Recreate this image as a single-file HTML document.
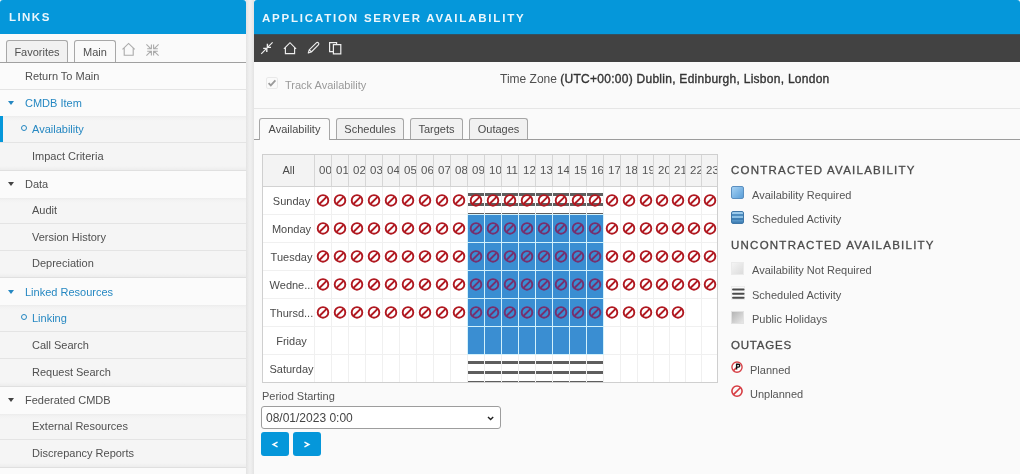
<!DOCTYPE html>
<html><head><meta charset="utf-8"><style>
*{box-sizing:border-box;margin:0;padding:0}
html,body{width:1020px;height:474px;overflow:hidden;background:#ececec;font-family:"Liberation Sans",sans-serif;color:#444}
.abs{position:absolute}
#left{position:absolute;left:0;top:0;width:246px;height:474px;background:#f6f6f6;overflow:hidden;will-change:transform}
#right{position:absolute;left:254px;top:0;width:766px;height:474px;background:#fafafa;overflow:hidden;will-change:transform}
.hdr{position:absolute;left:0;top:0;height:34px;background:#0597da;border-radius:3px 3px 0 0;color:#eaf6fc;font-weight:bold;font-size:11.5px;letter-spacing:1.8px;line-height:36px;white-space:nowrap}
.sep{position:absolute;left:246px;top:0;width:8px;height:474px;background:linear-gradient(to right,#e3e3e3,#efefef 40%,#efefef 60%,#e3e3e3)}
.tabbar{position:absolute;left:0;top:34px;width:246px;height:29px;background:#fafafa;border-bottom:1px solid #a0a0a0}
.ltab{position:absolute;top:6px;height:22px;border:1px solid #a8a8a8;border-bottom:none;border-radius:3px 3px 0 0;font-size:11px;line-height:23px;color:#505050;text-align:center}
.row{position:absolute;left:0;width:246px;font-size:11px;color:#505050;border-bottom:1px solid #e4e4e4}
.row span{position:absolute;white-space:nowrap;line-height:12px}
.grp{background:#fbfbfb}
.sub{background:#f5f5f5}
.sublast{background:linear-gradient(to bottom,#f5f5f5 85%,#ededed);border-bottom-color:#e0e0e0}
.subtop{background:linear-gradient(to bottom,#ececec,#f2f2f2 2px,#f5f5f5 5px)}
.blue{color:#2688c2}
.tri{position:absolute;width:0;height:0;border-left:3px solid transparent;border-right:3px solid transparent;border-top:4px solid #444}
.tri.b{border-top-color:#2688c2}
.bul{position:absolute;width:6px;height:6px;border:1.3px solid #2688c2;border-radius:50%}
.txt{position:absolute;white-space:nowrap;font-size:11px;line-height:12px}
</style></head><body>
<div id="left">
<div class="hdr" style="width:246px;padding-left:9px;letter-spacing:1.45px;line-height:35px">LINKS</div>
<div class="tabbar"><div class="ltab" style="left:6px;width:62px;background:#f1f1f1">Favorites</div><div class="ltab" style="left:74px;width:42px;background:#fafafa">Main</div></div>
<div class="row grp" style="top:63px;height:27px"><span style="left:25px;top:7px">Return To Main</span></div>
<div class="row grp blue" style="top:90px;height:27px;border-bottom:none"><i class="tri b" style="left:8px;top:11px"></i><span style="left:25px;top:7px">CMDB Item</span></div>
<div class="row sub subtop blue" style="top:116px;height:27px"><i class="abs" style="left:0;top:0;width:3px;height:26px;background:#0597da"></i><i class="bul" style="left:20.5px;top:9px"></i><span style="left:32px;top:7px">Availability</span></div>
<div class="row sub sublast" style="top:143px;height:28px"><span style="left:32px;top:7px">Impact Criteria</span></div>
<div class="row grp" style="top:171px;height:27px;border-bottom:none"><i class="tri" style="left:8px;top:11px"></i><span style="left:25px;top:7px">Data</span></div>
<div class="row sub subtop" style="top:198px;height:26px"><span style="left:32px;top:6px">Audit</span></div>
<div class="row sub" style="top:224px;height:27px"><span style="left:32px;top:7px">Version History</span></div>
<div class="row sub sublast" style="top:251px;height:27px"><span style="left:32px;top:6px">Depreciation</span></div>
<div class="row grp blue" style="top:278px;height:28px;border-bottom:none"><i class="tri b" style="left:8px;top:12px"></i><span style="left:25px;top:8px">Linked Resources</span></div>
<div class="row sub subtop blue" style="top:305px;height:27px"><i class="bul" style="left:20.5px;top:9px"></i><span style="left:32px;top:7px">Linking</span></div>
<div class="row sub" style="top:332px;height:27px"><span style="left:32px;top:7px">Call Search</span></div>
<div class="row sub sublast" style="top:359px;height:28px"><span style="left:32px;top:7px">Request Search</span></div>
<div class="row grp" style="top:387px;height:27px;border-bottom:none"><i class="tri" style="left:8px;top:11px"></i><span style="left:25px;top:7px">Federated CMDB</span></div>
<div class="row sub subtop" style="top:414px;height:26px"><span style="left:32px;top:6px">External Resources</span></div>
<div class="row sub sublast" style="top:440px;height:28px"><span style="left:32px;top:7px">Discrepancy Reports</span></div>
<div class="row grp" style="top:468px;height:28px;border-bottom:none"><i class="tri" style="left:8px;top:12px"></i><span style="left:25px;top:8px"></span></div>
<svg class="abs" style="left:118px;top:40px" width="46" height="20" viewBox="118 40 46 20" fill="none" stroke="#ababab" stroke-width="1.1">
<path d="M122.5 49.3 L128.6 43.4 L134.7 49.3 M124.2 47.6 V55.2 H133.2 V47.6"/>
<path d="M146.4 44.3 L151 48.9 M151.4 44.6 V48.8 H147.2 M158.6 44.3 L154 48.9 M153.6 44.6 V48.8 H157.8 M146.4 55.7 L151 51.1 M151.4 55.4 V51.2 H147.2 M158.6 55.7 L154 51.1 M153.6 55.4 V51.2 H157.8"/>
</svg>
</div>
<div class="sep"></div>
<div id="right">
<div class="hdr" style="width:766px;padding-left:8px">APPLICATION SERVER AVAILABILITY</div>
<div class="abs" style="left:0;top:34px;width:766px;height:28px;background:#424242;border-top:1px solid #34505f"></div>
</div>
<div style="position:absolute;left:0;top:0;width:1020px;height:474px;will-change:transform">
<svg class="abs" style="left:254px;top:34px" width="100" height="27" viewBox="254 34 100 27" fill="none" stroke="#eeeeee" stroke-width="1.2">
<path d="M261.2 53.8 L266.4 48.6 M272.6 42.4 L267.6 47.4"/>
<path d="M263.2 48.4 H266.8 V52 M267.4 43.8 V47.4 H271" stroke-width="1.4"/>
<path d="M283.9 48.9 L290 42.7 L296.1 48.9 M285.4 47.6 V53.6 H294.6 V47.6" stroke-width="1.15"/>
<path d="M308.3 53 L309.2 49.9 L316.3 42.8 A1.45 1.45 0 0 1 318.4 44.9 L311.3 52 Z M309.4 49.8 L311.4 51.8" stroke-width="1.1" stroke-linejoin="round"/>
<path d="M333 51.6 H329.6 V42.6 H336.6 V44.4 M333.4 44.6 H340.8 V53.8 H333.4 Z"/>
</svg>
<div class="abs" style="left:266px;top:77px;width:12px;height:12px;border:1px solid #e9e9e9;border-radius:2px;background:#fafafa"></div>
<svg class="abs" style="left:266px;top:77px" width="12" height="12" viewBox="0 0 12 12"><path d="M2.6 6.2 L4.8 8.4 L9.4 3.4" fill="none" stroke="#9a9a9a" stroke-width="1.8"/></svg>
<div class="txt" style="left:285px;top:79px;color:#9a9a9a;font-size:11px">Track Availability</div>
<div class="txt" style="left:500px;top:72px;color:#505050;font-size:12px;line-height:14px">Time Zone <span style="color:#333;letter-spacing:0.27px;-webkit-text-stroke:0.35px #333">(UTC+00:00) Dublin, Edinburgh, Lisbon, London</span></div>
<div class="abs" style="left:254px;top:108px;width:766px;height:1px;background:#e6e6e6"></div>
<div class="abs" style="left:254px;top:139px;width:766px;height:1px;background:#9c9c9c"></div>
<div class="abs" style="left:259px;top:118px;width:71px;height:22px;border:1px solid #a6a6a6;border-bottom:none;border-radius:3px 3px 0 0;background:#fafafa;font-size:11px;line-height:20px;text-align:center;color:#4a4a4a">Availability</div>
<div class="abs" style="left:336px;top:118px;width:68px;height:21px;border:1px solid #a6a6a6;border-bottom:none;border-radius:3px 3px 0 0;background:#f1f1f1;font-size:11px;line-height:20px;text-align:center;color:#4a4a4a">Schedules</div>
<div class="abs" style="left:410px;top:118px;width:53px;height:21px;border:1px solid #a6a6a6;border-bottom:none;border-radius:3px 3px 0 0;background:#f1f1f1;font-size:11px;line-height:20px;text-align:center;color:#4a4a4a">Targets</div>
<div class="abs" style="left:469px;top:118px;width:59px;height:21px;border:1px solid #a6a6a6;border-bottom:none;border-radius:3px 3px 0 0;background:#f1f1f1;font-size:11px;line-height:20px;text-align:center;color:#4a4a4a">Outages</div>
<div class="abs" style="left:262px;top:154px;width:456px;height:229px;border:1px solid #cfcfcf;background:#fff"></div>
<div class="abs" style="left:263px;top:155px;width:454px;height:31px;background:#f3f3f3"></div>
<div class="abs" style="left:263px;top:186px;width:454px;height:1px;background:#d2d2d2"></div>
<div class="abs" style="left:314px;top:155px;width:1px;height:31px;background:#d6d6d6"></div>
<div class="abs" style="left:314px;top:187px;width:1px;height:195px;background:#f0f0f0"></div>
<div class="abs" style="left:331px;top:155px;width:1px;height:31px;background:#d6d6d6"></div>
<div class="abs" style="left:331px;top:187px;width:1px;height:195px;background:#f0f0f0"></div>
<div class="abs" style="left:348px;top:155px;width:1px;height:31px;background:#d6d6d6"></div>
<div class="abs" style="left:348px;top:187px;width:1px;height:195px;background:#f0f0f0"></div>
<div class="abs" style="left:365px;top:155px;width:1px;height:31px;background:#d6d6d6"></div>
<div class="abs" style="left:365px;top:187px;width:1px;height:195px;background:#f0f0f0"></div>
<div class="abs" style="left:382px;top:155px;width:1px;height:31px;background:#d6d6d6"></div>
<div class="abs" style="left:382px;top:187px;width:1px;height:195px;background:#f0f0f0"></div>
<div class="abs" style="left:399px;top:155px;width:1px;height:31px;background:#d6d6d6"></div>
<div class="abs" style="left:399px;top:187px;width:1px;height:195px;background:#f0f0f0"></div>
<div class="abs" style="left:416px;top:155px;width:1px;height:31px;background:#d6d6d6"></div>
<div class="abs" style="left:416px;top:187px;width:1px;height:195px;background:#f0f0f0"></div>
<div class="abs" style="left:433px;top:155px;width:1px;height:31px;background:#d6d6d6"></div>
<div class="abs" style="left:433px;top:187px;width:1px;height:195px;background:#f0f0f0"></div>
<div class="abs" style="left:450px;top:155px;width:1px;height:31px;background:#d6d6d6"></div>
<div class="abs" style="left:450px;top:187px;width:1px;height:195px;background:#f0f0f0"></div>
<div class="abs" style="left:467px;top:155px;width:1px;height:31px;background:#d6d6d6"></div>
<div class="abs" style="left:467px;top:187px;width:1px;height:195px;background:#f0f0f0"></div>
<div class="abs" style="left:484px;top:155px;width:1px;height:31px;background:#d6d6d6"></div>
<div class="abs" style="left:484px;top:187px;width:1px;height:195px;background:#f0f0f0"></div>
<div class="abs" style="left:501px;top:155px;width:1px;height:31px;background:#d6d6d6"></div>
<div class="abs" style="left:501px;top:187px;width:1px;height:195px;background:#f0f0f0"></div>
<div class="abs" style="left:518px;top:155px;width:1px;height:31px;background:#d6d6d6"></div>
<div class="abs" style="left:518px;top:187px;width:1px;height:195px;background:#f0f0f0"></div>
<div class="abs" style="left:535px;top:155px;width:1px;height:31px;background:#d6d6d6"></div>
<div class="abs" style="left:535px;top:187px;width:1px;height:195px;background:#f0f0f0"></div>
<div class="abs" style="left:552px;top:155px;width:1px;height:31px;background:#d6d6d6"></div>
<div class="abs" style="left:552px;top:187px;width:1px;height:195px;background:#f0f0f0"></div>
<div class="abs" style="left:569px;top:155px;width:1px;height:31px;background:#d6d6d6"></div>
<div class="abs" style="left:569px;top:187px;width:1px;height:195px;background:#f0f0f0"></div>
<div class="abs" style="left:586px;top:155px;width:1px;height:31px;background:#d6d6d6"></div>
<div class="abs" style="left:586px;top:187px;width:1px;height:195px;background:#f0f0f0"></div>
<div class="abs" style="left:603px;top:155px;width:1px;height:31px;background:#d6d6d6"></div>
<div class="abs" style="left:603px;top:187px;width:1px;height:195px;background:#f0f0f0"></div>
<div class="abs" style="left:620px;top:155px;width:1px;height:31px;background:#d6d6d6"></div>
<div class="abs" style="left:620px;top:187px;width:1px;height:195px;background:#f0f0f0"></div>
<div class="abs" style="left:637px;top:155px;width:1px;height:31px;background:#d6d6d6"></div>
<div class="abs" style="left:637px;top:187px;width:1px;height:195px;background:#f0f0f0"></div>
<div class="abs" style="left:653px;top:155px;width:1px;height:31px;background:#d6d6d6"></div>
<div class="abs" style="left:653px;top:187px;width:1px;height:195px;background:#f0f0f0"></div>
<div class="abs" style="left:669px;top:155px;width:1px;height:31px;background:#d6d6d6"></div>
<div class="abs" style="left:669px;top:187px;width:1px;height:195px;background:#f0f0f0"></div>
<div class="abs" style="left:685px;top:155px;width:1px;height:31px;background:#d6d6d6"></div>
<div class="abs" style="left:685px;top:187px;width:1px;height:195px;background:#f0f0f0"></div>
<div class="abs" style="left:701px;top:155px;width:1px;height:31px;background:#d6d6d6"></div>
<div class="abs" style="left:701px;top:187px;width:1px;height:195px;background:#f0f0f0"></div>
<div class="abs" style="left:263px;top:214px;width:454px;height:1px;background:#f0f0f0"></div>
<div class="abs" style="left:263px;top:242px;width:454px;height:1px;background:#f0f0f0"></div>
<div class="abs" style="left:263px;top:270px;width:454px;height:1px;background:#f0f0f0"></div>
<div class="abs" style="left:263px;top:298px;width:454px;height:1px;background:#f0f0f0"></div>
<div class="abs" style="left:263px;top:326px;width:454px;height:1px;background:#f0f0f0"></div>
<div class="abs" style="left:263px;top:354px;width:454px;height:1px;background:#f0f0f0"></div>
<div class="txt" style="left:263px;top:164px;width:51px;text-align:center;color:#4a4a4a">All</div>
<div class="abs" style="left:315px;top:164px;width:16px;height:14px;overflow:hidden"><div class="txt" style="left:4px;top:0;color:#555;font-size:11.5px">00</div></div>
<div class="abs" style="left:332px;top:164px;width:16px;height:14px;overflow:hidden"><div class="txt" style="left:4px;top:0;color:#555;font-size:11.5px">01</div></div>
<div class="abs" style="left:349px;top:164px;width:16px;height:14px;overflow:hidden"><div class="txt" style="left:4px;top:0;color:#555;font-size:11.5px">02</div></div>
<div class="abs" style="left:366px;top:164px;width:16px;height:14px;overflow:hidden"><div class="txt" style="left:4px;top:0;color:#555;font-size:11.5px">03</div></div>
<div class="abs" style="left:383px;top:164px;width:16px;height:14px;overflow:hidden"><div class="txt" style="left:4px;top:0;color:#555;font-size:11.5px">04</div></div>
<div class="abs" style="left:400px;top:164px;width:16px;height:14px;overflow:hidden"><div class="txt" style="left:4px;top:0;color:#555;font-size:11.5px">05</div></div>
<div class="abs" style="left:417px;top:164px;width:16px;height:14px;overflow:hidden"><div class="txt" style="left:4px;top:0;color:#555;font-size:11.5px">06</div></div>
<div class="abs" style="left:434px;top:164px;width:16px;height:14px;overflow:hidden"><div class="txt" style="left:4px;top:0;color:#555;font-size:11.5px">07</div></div>
<div class="abs" style="left:451px;top:164px;width:16px;height:14px;overflow:hidden"><div class="txt" style="left:4px;top:0;color:#555;font-size:11.5px">08</div></div>
<div class="abs" style="left:468px;top:164px;width:16px;height:14px;overflow:hidden"><div class="txt" style="left:4px;top:0;color:#555;font-size:11.5px">09</div></div>
<div class="abs" style="left:485px;top:164px;width:16px;height:14px;overflow:hidden"><div class="txt" style="left:4px;top:0;color:#555;font-size:11.5px">10</div></div>
<div class="abs" style="left:502px;top:164px;width:16px;height:14px;overflow:hidden"><div class="txt" style="left:4px;top:0;color:#555;font-size:11.5px">11</div></div>
<div class="abs" style="left:519px;top:164px;width:16px;height:14px;overflow:hidden"><div class="txt" style="left:4px;top:0;color:#555;font-size:11.5px">12</div></div>
<div class="abs" style="left:536px;top:164px;width:16px;height:14px;overflow:hidden"><div class="txt" style="left:4px;top:0;color:#555;font-size:11.5px">13</div></div>
<div class="abs" style="left:553px;top:164px;width:16px;height:14px;overflow:hidden"><div class="txt" style="left:4px;top:0;color:#555;font-size:11.5px">14</div></div>
<div class="abs" style="left:570px;top:164px;width:16px;height:14px;overflow:hidden"><div class="txt" style="left:4px;top:0;color:#555;font-size:11.5px">15</div></div>
<div class="abs" style="left:587px;top:164px;width:16px;height:14px;overflow:hidden"><div class="txt" style="left:4px;top:0;color:#555;font-size:11.5px">16</div></div>
<div class="abs" style="left:604px;top:164px;width:16px;height:14px;overflow:hidden"><div class="txt" style="left:4px;top:0;color:#555;font-size:11.5px">17</div></div>
<div class="abs" style="left:621px;top:164px;width:16px;height:14px;overflow:hidden"><div class="txt" style="left:4px;top:0;color:#555;font-size:11.5px">18</div></div>
<div class="abs" style="left:638px;top:164px;width:15px;height:14px;overflow:hidden"><div class="txt" style="left:4px;top:0;color:#555;font-size:11.5px">19</div></div>
<div class="abs" style="left:654px;top:164px;width:15px;height:14px;overflow:hidden"><div class="txt" style="left:4px;top:0;color:#555;font-size:11.5px">20</div></div>
<div class="abs" style="left:670px;top:164px;width:15px;height:14px;overflow:hidden"><div class="txt" style="left:4px;top:0;color:#555;font-size:11.5px">21</div></div>
<div class="abs" style="left:686px;top:164px;width:15px;height:14px;overflow:hidden"><div class="txt" style="left:4px;top:0;color:#555;font-size:11.5px">22</div></div>
<div class="abs" style="left:702px;top:164px;width:15px;height:14px;overflow:hidden"><div class="txt" style="left:4px;top:0;color:#555;font-size:11.5px">23</div></div>
<div class="txt" style="left:263px;top:195px;width:51px;text-align:center;color:#4a4a4a;padding-left:6px">Sunday</div>
<div class="txt" style="left:263px;top:223px;width:51px;text-align:center;color:#4a4a4a;padding-left:6px">Monday</div>
<div class="txt" style="left:263px;top:251px;width:51px;text-align:center;color:#4a4a4a;padding-left:6px">Tuesday</div>
<div class="txt" style="left:263px;top:279px;width:51px;text-align:center;color:#4a4a4a;padding-left:6px">Wedne...</div>
<div class="txt" style="left:263px;top:307px;width:51px;text-align:center;color:#4a4a4a;padding-left:6px">Thursd...</div>
<div class="txt" style="left:263px;top:335px;width:51px;text-align:center;color:#4a4a4a;padding-left:6px">Friday</div>
<div class="txt" style="left:263px;top:363px;width:51px;text-align:center;color:#4a4a4a;padding-left:6px">Saturday</div>
<div class="abs" style="left:467px;top:214px;width:137px;height:141px;background:#d2f1fb"></div>
<div class="abs" style="left:468px;top:215px;width:16px;height:27px;background:#3a8ed2"></div>
<div class="abs" style="left:485px;top:215px;width:16px;height:27px;background:#3a8ed2"></div>
<div class="abs" style="left:502px;top:215px;width:16px;height:27px;background:#3a8ed2"></div>
<div class="abs" style="left:519px;top:215px;width:16px;height:27px;background:#3a8ed2"></div>
<div class="abs" style="left:536px;top:215px;width:16px;height:27px;background:#3a8ed2"></div>
<div class="abs" style="left:553px;top:215px;width:16px;height:27px;background:#3a8ed2"></div>
<div class="abs" style="left:570px;top:215px;width:16px;height:27px;background:#3a8ed2"></div>
<div class="abs" style="left:587px;top:215px;width:16px;height:27px;background:#3a8ed2"></div>
<div class="abs" style="left:468px;top:243px;width:16px;height:27px;background:#3a8ed2"></div>
<div class="abs" style="left:485px;top:243px;width:16px;height:27px;background:#3a8ed2"></div>
<div class="abs" style="left:502px;top:243px;width:16px;height:27px;background:#3a8ed2"></div>
<div class="abs" style="left:519px;top:243px;width:16px;height:27px;background:#3a8ed2"></div>
<div class="abs" style="left:536px;top:243px;width:16px;height:27px;background:#3a8ed2"></div>
<div class="abs" style="left:553px;top:243px;width:16px;height:27px;background:#3a8ed2"></div>
<div class="abs" style="left:570px;top:243px;width:16px;height:27px;background:#3a8ed2"></div>
<div class="abs" style="left:587px;top:243px;width:16px;height:27px;background:#3a8ed2"></div>
<div class="abs" style="left:468px;top:271px;width:16px;height:27px;background:#3a8ed2"></div>
<div class="abs" style="left:485px;top:271px;width:16px;height:27px;background:#3a8ed2"></div>
<div class="abs" style="left:502px;top:271px;width:16px;height:27px;background:#3a8ed2"></div>
<div class="abs" style="left:519px;top:271px;width:16px;height:27px;background:#3a8ed2"></div>
<div class="abs" style="left:536px;top:271px;width:16px;height:27px;background:#3a8ed2"></div>
<div class="abs" style="left:553px;top:271px;width:16px;height:27px;background:#3a8ed2"></div>
<div class="abs" style="left:570px;top:271px;width:16px;height:27px;background:#3a8ed2"></div>
<div class="abs" style="left:587px;top:271px;width:16px;height:27px;background:#3a8ed2"></div>
<div class="abs" style="left:468px;top:299px;width:16px;height:27px;background:#3a8ed2"></div>
<div class="abs" style="left:485px;top:299px;width:16px;height:27px;background:#3a8ed2"></div>
<div class="abs" style="left:502px;top:299px;width:16px;height:27px;background:#3a8ed2"></div>
<div class="abs" style="left:519px;top:299px;width:16px;height:27px;background:#3a8ed2"></div>
<div class="abs" style="left:536px;top:299px;width:16px;height:27px;background:#3a8ed2"></div>
<div class="abs" style="left:553px;top:299px;width:16px;height:27px;background:#3a8ed2"></div>
<div class="abs" style="left:570px;top:299px;width:16px;height:27px;background:#3a8ed2"></div>
<div class="abs" style="left:587px;top:299px;width:16px;height:27px;background:#3a8ed2"></div>
<div class="abs" style="left:468px;top:327px;width:16px;height:27px;background:#3a8ed2"></div>
<div class="abs" style="left:485px;top:327px;width:16px;height:27px;background:#3a8ed2"></div>
<div class="abs" style="left:502px;top:327px;width:16px;height:27px;background:#3a8ed2"></div>
<div class="abs" style="left:519px;top:327px;width:16px;height:27px;background:#3a8ed2"></div>
<div class="abs" style="left:536px;top:327px;width:16px;height:27px;background:#3a8ed2"></div>
<div class="abs" style="left:553px;top:327px;width:16px;height:27px;background:#3a8ed2"></div>
<div class="abs" style="left:570px;top:327px;width:16px;height:27px;background:#3a8ed2"></div>
<div class="abs" style="left:587px;top:327px;width:16px;height:27px;background:#3a8ed2"></div>
<div class="abs" style="left:468px;top:187px;width:16px;height:27px;background:repeating-linear-gradient(to bottom,transparent 0,transparent 6px,#5e5e5e 6px,#5e5e5e 9px,transparent 9px,transparent 10px)"></div>
<div class="abs" style="left:485px;top:187px;width:16px;height:27px;background:repeating-linear-gradient(to bottom,transparent 0,transparent 6px,#5e5e5e 6px,#5e5e5e 9px,transparent 9px,transparent 10px)"></div>
<div class="abs" style="left:502px;top:187px;width:16px;height:27px;background:repeating-linear-gradient(to bottom,transparent 0,transparent 6px,#5e5e5e 6px,#5e5e5e 9px,transparent 9px,transparent 10px)"></div>
<div class="abs" style="left:519px;top:187px;width:16px;height:27px;background:repeating-linear-gradient(to bottom,transparent 0,transparent 6px,#5e5e5e 6px,#5e5e5e 9px,transparent 9px,transparent 10px)"></div>
<div class="abs" style="left:536px;top:187px;width:16px;height:27px;background:repeating-linear-gradient(to bottom,transparent 0,transparent 6px,#5e5e5e 6px,#5e5e5e 9px,transparent 9px,transparent 10px)"></div>
<div class="abs" style="left:553px;top:187px;width:16px;height:27px;background:repeating-linear-gradient(to bottom,transparent 0,transparent 6px,#5e5e5e 6px,#5e5e5e 9px,transparent 9px,transparent 10px)"></div>
<div class="abs" style="left:570px;top:187px;width:16px;height:27px;background:repeating-linear-gradient(to bottom,transparent 0,transparent 6px,#5e5e5e 6px,#5e5e5e 9px,transparent 9px,transparent 10px)"></div>
<div class="abs" style="left:587px;top:187px;width:16px;height:27px;background:repeating-linear-gradient(to bottom,transparent 0,transparent 6px,#5e5e5e 6px,#5e5e5e 9px,transparent 9px,transparent 10px)"></div>
<div class="abs" style="left:468px;top:355px;width:16px;height:27px;background:repeating-linear-gradient(to bottom,transparent 0,transparent 6px,#5e5e5e 6px,#5e5e5e 9px,transparent 9px,transparent 10px)"></div>
<div class="abs" style="left:485px;top:355px;width:16px;height:27px;background:repeating-linear-gradient(to bottom,transparent 0,transparent 6px,#5e5e5e 6px,#5e5e5e 9px,transparent 9px,transparent 10px)"></div>
<div class="abs" style="left:502px;top:355px;width:16px;height:27px;background:repeating-linear-gradient(to bottom,transparent 0,transparent 6px,#5e5e5e 6px,#5e5e5e 9px,transparent 9px,transparent 10px)"></div>
<div class="abs" style="left:519px;top:355px;width:16px;height:27px;background:repeating-linear-gradient(to bottom,transparent 0,transparent 6px,#5e5e5e 6px,#5e5e5e 9px,transparent 9px,transparent 10px)"></div>
<div class="abs" style="left:536px;top:355px;width:16px;height:27px;background:repeating-linear-gradient(to bottom,transparent 0,transparent 6px,#5e5e5e 6px,#5e5e5e 9px,transparent 9px,transparent 10px)"></div>
<div class="abs" style="left:553px;top:355px;width:16px;height:27px;background:repeating-linear-gradient(to bottom,transparent 0,transparent 6px,#5e5e5e 6px,#5e5e5e 9px,transparent 9px,transparent 10px)"></div>
<div class="abs" style="left:570px;top:355px;width:16px;height:27px;background:repeating-linear-gradient(to bottom,transparent 0,transparent 6px,#5e5e5e 6px,#5e5e5e 9px,transparent 9px,transparent 10px)"></div>
<div class="abs" style="left:587px;top:355px;width:16px;height:27px;background:repeating-linear-gradient(to bottom,transparent 0,transparent 6px,#5e5e5e 6px,#5e5e5e 9px,transparent 9px,transparent 10px)"></div>
<svg class="abs" style="left:316.0px;top:193px" width="14" height="14" viewBox="0 0 14 14"><circle cx="7" cy="7.4" r="5.3" fill="none" stroke="#b01820" stroke-width="1.9"/><path d="M10.6 3.8 L3.4 11" stroke="#b01820" stroke-width="1.9"/></svg>
<svg class="abs" style="left:333.0px;top:193px" width="14" height="14" viewBox="0 0 14 14"><circle cx="7" cy="7.4" r="5.3" fill="none" stroke="#b01820" stroke-width="1.9"/><path d="M10.6 3.8 L3.4 11" stroke="#b01820" stroke-width="1.9"/></svg>
<svg class="abs" style="left:350.0px;top:193px" width="14" height="14" viewBox="0 0 14 14"><circle cx="7" cy="7.4" r="5.3" fill="none" stroke="#b01820" stroke-width="1.9"/><path d="M10.6 3.8 L3.4 11" stroke="#b01820" stroke-width="1.9"/></svg>
<svg class="abs" style="left:367.0px;top:193px" width="14" height="14" viewBox="0 0 14 14"><circle cx="7" cy="7.4" r="5.3" fill="none" stroke="#b01820" stroke-width="1.9"/><path d="M10.6 3.8 L3.4 11" stroke="#b01820" stroke-width="1.9"/></svg>
<svg class="abs" style="left:384.0px;top:193px" width="14" height="14" viewBox="0 0 14 14"><circle cx="7" cy="7.4" r="5.3" fill="none" stroke="#b01820" stroke-width="1.9"/><path d="M10.6 3.8 L3.4 11" stroke="#b01820" stroke-width="1.9"/></svg>
<svg class="abs" style="left:401.0px;top:193px" width="14" height="14" viewBox="0 0 14 14"><circle cx="7" cy="7.4" r="5.3" fill="none" stroke="#b01820" stroke-width="1.9"/><path d="M10.6 3.8 L3.4 11" stroke="#b01820" stroke-width="1.9"/></svg>
<svg class="abs" style="left:418.0px;top:193px" width="14" height="14" viewBox="0 0 14 14"><circle cx="7" cy="7.4" r="5.3" fill="none" stroke="#b01820" stroke-width="1.9"/><path d="M10.6 3.8 L3.4 11" stroke="#b01820" stroke-width="1.9"/></svg>
<svg class="abs" style="left:435.0px;top:193px" width="14" height="14" viewBox="0 0 14 14"><circle cx="7" cy="7.4" r="5.3" fill="none" stroke="#b01820" stroke-width="1.9"/><path d="M10.6 3.8 L3.4 11" stroke="#b01820" stroke-width="1.9"/></svg>
<svg class="abs" style="left:452.0px;top:193px" width="14" height="14" viewBox="0 0 14 14"><circle cx="7" cy="7.4" r="5.3" fill="none" stroke="#b01820" stroke-width="1.9"/><path d="M10.6 3.8 L3.4 11" stroke="#b01820" stroke-width="1.9"/></svg>
<svg class="abs" style="left:469.0px;top:193px" width="14" height="14" viewBox="0 0 14 14"><circle cx="7" cy="7.4" r="5.3" fill="none" stroke="#b01820" stroke-width="1.9"/><path d="M10.6 3.8 L3.4 11" stroke="#b01820" stroke-width="1.9"/></svg>
<svg class="abs" style="left:486.0px;top:193px" width="14" height="14" viewBox="0 0 14 14"><circle cx="7" cy="7.4" r="5.3" fill="none" stroke="#b01820" stroke-width="1.9"/><path d="M10.6 3.8 L3.4 11" stroke="#b01820" stroke-width="1.9"/></svg>
<svg class="abs" style="left:503.0px;top:193px" width="14" height="14" viewBox="0 0 14 14"><circle cx="7" cy="7.4" r="5.3" fill="none" stroke="#b01820" stroke-width="1.9"/><path d="M10.6 3.8 L3.4 11" stroke="#b01820" stroke-width="1.9"/></svg>
<svg class="abs" style="left:520.0px;top:193px" width="14" height="14" viewBox="0 0 14 14"><circle cx="7" cy="7.4" r="5.3" fill="none" stroke="#b01820" stroke-width="1.9"/><path d="M10.6 3.8 L3.4 11" stroke="#b01820" stroke-width="1.9"/></svg>
<svg class="abs" style="left:537.0px;top:193px" width="14" height="14" viewBox="0 0 14 14"><circle cx="7" cy="7.4" r="5.3" fill="none" stroke="#b01820" stroke-width="1.9"/><path d="M10.6 3.8 L3.4 11" stroke="#b01820" stroke-width="1.9"/></svg>
<svg class="abs" style="left:554.0px;top:193px" width="14" height="14" viewBox="0 0 14 14"><circle cx="7" cy="7.4" r="5.3" fill="none" stroke="#b01820" stroke-width="1.9"/><path d="M10.6 3.8 L3.4 11" stroke="#b01820" stroke-width="1.9"/></svg>
<svg class="abs" style="left:571.0px;top:193px" width="14" height="14" viewBox="0 0 14 14"><circle cx="7" cy="7.4" r="5.3" fill="none" stroke="#b01820" stroke-width="1.9"/><path d="M10.6 3.8 L3.4 11" stroke="#b01820" stroke-width="1.9"/></svg>
<svg class="abs" style="left:588.0px;top:193px" width="14" height="14" viewBox="0 0 14 14"><circle cx="7" cy="7.4" r="5.3" fill="none" stroke="#b01820" stroke-width="1.9"/><path d="M10.6 3.8 L3.4 11" stroke="#b01820" stroke-width="1.9"/></svg>
<svg class="abs" style="left:605.0px;top:193px" width="14" height="14" viewBox="0 0 14 14"><circle cx="7" cy="7.4" r="5.3" fill="none" stroke="#b01820" stroke-width="1.9"/><path d="M10.6 3.8 L3.4 11" stroke="#b01820" stroke-width="1.9"/></svg>
<svg class="abs" style="left:622.0px;top:193px" width="14" height="14" viewBox="0 0 14 14"><circle cx="7" cy="7.4" r="5.3" fill="none" stroke="#b01820" stroke-width="1.9"/><path d="M10.6 3.8 L3.4 11" stroke="#b01820" stroke-width="1.9"/></svg>
<svg class="abs" style="left:638.5px;top:193px" width="14" height="14" viewBox="0 0 14 14"><circle cx="7" cy="7.4" r="5.3" fill="none" stroke="#b01820" stroke-width="1.9"/><path d="M10.6 3.8 L3.4 11" stroke="#b01820" stroke-width="1.9"/></svg>
<svg class="abs" style="left:654.5px;top:193px" width="14" height="14" viewBox="0 0 14 14"><circle cx="7" cy="7.4" r="5.3" fill="none" stroke="#b01820" stroke-width="1.9"/><path d="M10.6 3.8 L3.4 11" stroke="#b01820" stroke-width="1.9"/></svg>
<svg class="abs" style="left:670.5px;top:193px" width="14" height="14" viewBox="0 0 14 14"><circle cx="7" cy="7.4" r="5.3" fill="none" stroke="#b01820" stroke-width="1.9"/><path d="M10.6 3.8 L3.4 11" stroke="#b01820" stroke-width="1.9"/></svg>
<svg class="abs" style="left:686.5px;top:193px" width="14" height="14" viewBox="0 0 14 14"><circle cx="7" cy="7.4" r="5.3" fill="none" stroke="#b01820" stroke-width="1.9"/><path d="M10.6 3.8 L3.4 11" stroke="#b01820" stroke-width="1.9"/></svg>
<svg class="abs" style="left:702.5px;top:193px" width="14" height="14" viewBox="0 0 14 14"><circle cx="7" cy="7.4" r="5.3" fill="none" stroke="#b01820" stroke-width="1.9"/><path d="M10.6 3.8 L3.4 11" stroke="#b01820" stroke-width="1.9"/></svg>
<svg class="abs" style="left:316.0px;top:221px" width="14" height="14" viewBox="0 0 14 14"><circle cx="7" cy="7.4" r="5.3" fill="none" stroke="#b01820" stroke-width="1.9"/><path d="M10.6 3.8 L3.4 11" stroke="#b01820" stroke-width="1.9"/></svg>
<svg class="abs" style="left:333.0px;top:221px" width="14" height="14" viewBox="0 0 14 14"><circle cx="7" cy="7.4" r="5.3" fill="none" stroke="#b01820" stroke-width="1.9"/><path d="M10.6 3.8 L3.4 11" stroke="#b01820" stroke-width="1.9"/></svg>
<svg class="abs" style="left:350.0px;top:221px" width="14" height="14" viewBox="0 0 14 14"><circle cx="7" cy="7.4" r="5.3" fill="none" stroke="#b01820" stroke-width="1.9"/><path d="M10.6 3.8 L3.4 11" stroke="#b01820" stroke-width="1.9"/></svg>
<svg class="abs" style="left:367.0px;top:221px" width="14" height="14" viewBox="0 0 14 14"><circle cx="7" cy="7.4" r="5.3" fill="none" stroke="#b01820" stroke-width="1.9"/><path d="M10.6 3.8 L3.4 11" stroke="#b01820" stroke-width="1.9"/></svg>
<svg class="abs" style="left:384.0px;top:221px" width="14" height="14" viewBox="0 0 14 14"><circle cx="7" cy="7.4" r="5.3" fill="none" stroke="#b01820" stroke-width="1.9"/><path d="M10.6 3.8 L3.4 11" stroke="#b01820" stroke-width="1.9"/></svg>
<svg class="abs" style="left:401.0px;top:221px" width="14" height="14" viewBox="0 0 14 14"><circle cx="7" cy="7.4" r="5.3" fill="none" stroke="#b01820" stroke-width="1.9"/><path d="M10.6 3.8 L3.4 11" stroke="#b01820" stroke-width="1.9"/></svg>
<svg class="abs" style="left:418.0px;top:221px" width="14" height="14" viewBox="0 0 14 14"><circle cx="7" cy="7.4" r="5.3" fill="none" stroke="#b01820" stroke-width="1.9"/><path d="M10.6 3.8 L3.4 11" stroke="#b01820" stroke-width="1.9"/></svg>
<svg class="abs" style="left:435.0px;top:221px" width="14" height="14" viewBox="0 0 14 14"><circle cx="7" cy="7.4" r="5.3" fill="none" stroke="#b01820" stroke-width="1.9"/><path d="M10.6 3.8 L3.4 11" stroke="#b01820" stroke-width="1.9"/></svg>
<svg class="abs" style="left:452.0px;top:221px" width="14" height="14" viewBox="0 0 14 14"><circle cx="7" cy="7.4" r="5.3" fill="none" stroke="#b01820" stroke-width="1.9"/><path d="M10.6 3.8 L3.4 11" stroke="#b01820" stroke-width="1.9"/></svg>
<svg class="abs" style="left:469.0px;top:221px" width="14" height="14" viewBox="0 0 14 14"><circle cx="7" cy="7.4" r="5.3" fill="none" stroke="#76306e" stroke-width="1.9"/><path d="M10.6 3.8 L3.4 11" stroke="#76306e" stroke-width="1.9"/></svg>
<svg class="abs" style="left:486.0px;top:221px" width="14" height="14" viewBox="0 0 14 14"><circle cx="7" cy="7.4" r="5.3" fill="none" stroke="#76306e" stroke-width="1.9"/><path d="M10.6 3.8 L3.4 11" stroke="#76306e" stroke-width="1.9"/></svg>
<svg class="abs" style="left:503.0px;top:221px" width="14" height="14" viewBox="0 0 14 14"><circle cx="7" cy="7.4" r="5.3" fill="none" stroke="#76306e" stroke-width="1.9"/><path d="M10.6 3.8 L3.4 11" stroke="#76306e" stroke-width="1.9"/></svg>
<svg class="abs" style="left:520.0px;top:221px" width="14" height="14" viewBox="0 0 14 14"><circle cx="7" cy="7.4" r="5.3" fill="none" stroke="#76306e" stroke-width="1.9"/><path d="M10.6 3.8 L3.4 11" stroke="#76306e" stroke-width="1.9"/></svg>
<svg class="abs" style="left:537.0px;top:221px" width="14" height="14" viewBox="0 0 14 14"><circle cx="7" cy="7.4" r="5.3" fill="none" stroke="#76306e" stroke-width="1.9"/><path d="M10.6 3.8 L3.4 11" stroke="#76306e" stroke-width="1.9"/></svg>
<svg class="abs" style="left:554.0px;top:221px" width="14" height="14" viewBox="0 0 14 14"><circle cx="7" cy="7.4" r="5.3" fill="none" stroke="#76306e" stroke-width="1.9"/><path d="M10.6 3.8 L3.4 11" stroke="#76306e" stroke-width="1.9"/></svg>
<svg class="abs" style="left:571.0px;top:221px" width="14" height="14" viewBox="0 0 14 14"><circle cx="7" cy="7.4" r="5.3" fill="none" stroke="#76306e" stroke-width="1.9"/><path d="M10.6 3.8 L3.4 11" stroke="#76306e" stroke-width="1.9"/></svg>
<svg class="abs" style="left:588.0px;top:221px" width="14" height="14" viewBox="0 0 14 14"><circle cx="7" cy="7.4" r="5.3" fill="none" stroke="#76306e" stroke-width="1.9"/><path d="M10.6 3.8 L3.4 11" stroke="#76306e" stroke-width="1.9"/></svg>
<svg class="abs" style="left:605.0px;top:221px" width="14" height="14" viewBox="0 0 14 14"><circle cx="7" cy="7.4" r="5.3" fill="none" stroke="#b01820" stroke-width="1.9"/><path d="M10.6 3.8 L3.4 11" stroke="#b01820" stroke-width="1.9"/></svg>
<svg class="abs" style="left:622.0px;top:221px" width="14" height="14" viewBox="0 0 14 14"><circle cx="7" cy="7.4" r="5.3" fill="none" stroke="#b01820" stroke-width="1.9"/><path d="M10.6 3.8 L3.4 11" stroke="#b01820" stroke-width="1.9"/></svg>
<svg class="abs" style="left:638.5px;top:221px" width="14" height="14" viewBox="0 0 14 14"><circle cx="7" cy="7.4" r="5.3" fill="none" stroke="#b01820" stroke-width="1.9"/><path d="M10.6 3.8 L3.4 11" stroke="#b01820" stroke-width="1.9"/></svg>
<svg class="abs" style="left:654.5px;top:221px" width="14" height="14" viewBox="0 0 14 14"><circle cx="7" cy="7.4" r="5.3" fill="none" stroke="#b01820" stroke-width="1.9"/><path d="M10.6 3.8 L3.4 11" stroke="#b01820" stroke-width="1.9"/></svg>
<svg class="abs" style="left:670.5px;top:221px" width="14" height="14" viewBox="0 0 14 14"><circle cx="7" cy="7.4" r="5.3" fill="none" stroke="#b01820" stroke-width="1.9"/><path d="M10.6 3.8 L3.4 11" stroke="#b01820" stroke-width="1.9"/></svg>
<svg class="abs" style="left:686.5px;top:221px" width="14" height="14" viewBox="0 0 14 14"><circle cx="7" cy="7.4" r="5.3" fill="none" stroke="#b01820" stroke-width="1.9"/><path d="M10.6 3.8 L3.4 11" stroke="#b01820" stroke-width="1.9"/></svg>
<svg class="abs" style="left:702.5px;top:221px" width="14" height="14" viewBox="0 0 14 14"><circle cx="7" cy="7.4" r="5.3" fill="none" stroke="#b01820" stroke-width="1.9"/><path d="M10.6 3.8 L3.4 11" stroke="#b01820" stroke-width="1.9"/></svg>
<svg class="abs" style="left:316.0px;top:249px" width="14" height="14" viewBox="0 0 14 14"><circle cx="7" cy="7.4" r="5.3" fill="none" stroke="#b01820" stroke-width="1.9"/><path d="M10.6 3.8 L3.4 11" stroke="#b01820" stroke-width="1.9"/></svg>
<svg class="abs" style="left:333.0px;top:249px" width="14" height="14" viewBox="0 0 14 14"><circle cx="7" cy="7.4" r="5.3" fill="none" stroke="#b01820" stroke-width="1.9"/><path d="M10.6 3.8 L3.4 11" stroke="#b01820" stroke-width="1.9"/></svg>
<svg class="abs" style="left:350.0px;top:249px" width="14" height="14" viewBox="0 0 14 14"><circle cx="7" cy="7.4" r="5.3" fill="none" stroke="#b01820" stroke-width="1.9"/><path d="M10.6 3.8 L3.4 11" stroke="#b01820" stroke-width="1.9"/></svg>
<svg class="abs" style="left:367.0px;top:249px" width="14" height="14" viewBox="0 0 14 14"><circle cx="7" cy="7.4" r="5.3" fill="none" stroke="#b01820" stroke-width="1.9"/><path d="M10.6 3.8 L3.4 11" stroke="#b01820" stroke-width="1.9"/></svg>
<svg class="abs" style="left:384.0px;top:249px" width="14" height="14" viewBox="0 0 14 14"><circle cx="7" cy="7.4" r="5.3" fill="none" stroke="#b01820" stroke-width="1.9"/><path d="M10.6 3.8 L3.4 11" stroke="#b01820" stroke-width="1.9"/></svg>
<svg class="abs" style="left:401.0px;top:249px" width="14" height="14" viewBox="0 0 14 14"><circle cx="7" cy="7.4" r="5.3" fill="none" stroke="#b01820" stroke-width="1.9"/><path d="M10.6 3.8 L3.4 11" stroke="#b01820" stroke-width="1.9"/></svg>
<svg class="abs" style="left:418.0px;top:249px" width="14" height="14" viewBox="0 0 14 14"><circle cx="7" cy="7.4" r="5.3" fill="none" stroke="#b01820" stroke-width="1.9"/><path d="M10.6 3.8 L3.4 11" stroke="#b01820" stroke-width="1.9"/></svg>
<svg class="abs" style="left:435.0px;top:249px" width="14" height="14" viewBox="0 0 14 14"><circle cx="7" cy="7.4" r="5.3" fill="none" stroke="#b01820" stroke-width="1.9"/><path d="M10.6 3.8 L3.4 11" stroke="#b01820" stroke-width="1.9"/></svg>
<svg class="abs" style="left:452.0px;top:249px" width="14" height="14" viewBox="0 0 14 14"><circle cx="7" cy="7.4" r="5.3" fill="none" stroke="#b01820" stroke-width="1.9"/><path d="M10.6 3.8 L3.4 11" stroke="#b01820" stroke-width="1.9"/></svg>
<svg class="abs" style="left:469.0px;top:249px" width="14" height="14" viewBox="0 0 14 14"><circle cx="7" cy="7.4" r="5.3" fill="none" stroke="#76306e" stroke-width="1.9"/><path d="M10.6 3.8 L3.4 11" stroke="#76306e" stroke-width="1.9"/></svg>
<svg class="abs" style="left:486.0px;top:249px" width="14" height="14" viewBox="0 0 14 14"><circle cx="7" cy="7.4" r="5.3" fill="none" stroke="#76306e" stroke-width="1.9"/><path d="M10.6 3.8 L3.4 11" stroke="#76306e" stroke-width="1.9"/></svg>
<svg class="abs" style="left:503.0px;top:249px" width="14" height="14" viewBox="0 0 14 14"><circle cx="7" cy="7.4" r="5.3" fill="none" stroke="#76306e" stroke-width="1.9"/><path d="M10.6 3.8 L3.4 11" stroke="#76306e" stroke-width="1.9"/></svg>
<svg class="abs" style="left:520.0px;top:249px" width="14" height="14" viewBox="0 0 14 14"><circle cx="7" cy="7.4" r="5.3" fill="none" stroke="#76306e" stroke-width="1.9"/><path d="M10.6 3.8 L3.4 11" stroke="#76306e" stroke-width="1.9"/></svg>
<svg class="abs" style="left:537.0px;top:249px" width="14" height="14" viewBox="0 0 14 14"><circle cx="7" cy="7.4" r="5.3" fill="none" stroke="#76306e" stroke-width="1.9"/><path d="M10.6 3.8 L3.4 11" stroke="#76306e" stroke-width="1.9"/></svg>
<svg class="abs" style="left:554.0px;top:249px" width="14" height="14" viewBox="0 0 14 14"><circle cx="7" cy="7.4" r="5.3" fill="none" stroke="#76306e" stroke-width="1.9"/><path d="M10.6 3.8 L3.4 11" stroke="#76306e" stroke-width="1.9"/></svg>
<svg class="abs" style="left:571.0px;top:249px" width="14" height="14" viewBox="0 0 14 14"><circle cx="7" cy="7.4" r="5.3" fill="none" stroke="#76306e" stroke-width="1.9"/><path d="M10.6 3.8 L3.4 11" stroke="#76306e" stroke-width="1.9"/></svg>
<svg class="abs" style="left:588.0px;top:249px" width="14" height="14" viewBox="0 0 14 14"><circle cx="7" cy="7.4" r="5.3" fill="none" stroke="#76306e" stroke-width="1.9"/><path d="M10.6 3.8 L3.4 11" stroke="#76306e" stroke-width="1.9"/></svg>
<svg class="abs" style="left:605.0px;top:249px" width="14" height="14" viewBox="0 0 14 14"><circle cx="7" cy="7.4" r="5.3" fill="none" stroke="#b01820" stroke-width="1.9"/><path d="M10.6 3.8 L3.4 11" stroke="#b01820" stroke-width="1.9"/></svg>
<svg class="abs" style="left:622.0px;top:249px" width="14" height="14" viewBox="0 0 14 14"><circle cx="7" cy="7.4" r="5.3" fill="none" stroke="#b01820" stroke-width="1.9"/><path d="M10.6 3.8 L3.4 11" stroke="#b01820" stroke-width="1.9"/></svg>
<svg class="abs" style="left:638.5px;top:249px" width="14" height="14" viewBox="0 0 14 14"><circle cx="7" cy="7.4" r="5.3" fill="none" stroke="#b01820" stroke-width="1.9"/><path d="M10.6 3.8 L3.4 11" stroke="#b01820" stroke-width="1.9"/></svg>
<svg class="abs" style="left:654.5px;top:249px" width="14" height="14" viewBox="0 0 14 14"><circle cx="7" cy="7.4" r="5.3" fill="none" stroke="#b01820" stroke-width="1.9"/><path d="M10.6 3.8 L3.4 11" stroke="#b01820" stroke-width="1.9"/></svg>
<svg class="abs" style="left:670.5px;top:249px" width="14" height="14" viewBox="0 0 14 14"><circle cx="7" cy="7.4" r="5.3" fill="none" stroke="#b01820" stroke-width="1.9"/><path d="M10.6 3.8 L3.4 11" stroke="#b01820" stroke-width="1.9"/></svg>
<svg class="abs" style="left:686.5px;top:249px" width="14" height="14" viewBox="0 0 14 14"><circle cx="7" cy="7.4" r="5.3" fill="none" stroke="#b01820" stroke-width="1.9"/><path d="M10.6 3.8 L3.4 11" stroke="#b01820" stroke-width="1.9"/></svg>
<svg class="abs" style="left:702.5px;top:249px" width="14" height="14" viewBox="0 0 14 14"><circle cx="7" cy="7.4" r="5.3" fill="none" stroke="#b01820" stroke-width="1.9"/><path d="M10.6 3.8 L3.4 11" stroke="#b01820" stroke-width="1.9"/></svg>
<svg class="abs" style="left:316.0px;top:277px" width="14" height="14" viewBox="0 0 14 14"><circle cx="7" cy="7.4" r="5.3" fill="none" stroke="#b01820" stroke-width="1.9"/><path d="M10.6 3.8 L3.4 11" stroke="#b01820" stroke-width="1.9"/></svg>
<svg class="abs" style="left:333.0px;top:277px" width="14" height="14" viewBox="0 0 14 14"><circle cx="7" cy="7.4" r="5.3" fill="none" stroke="#b01820" stroke-width="1.9"/><path d="M10.6 3.8 L3.4 11" stroke="#b01820" stroke-width="1.9"/></svg>
<svg class="abs" style="left:350.0px;top:277px" width="14" height="14" viewBox="0 0 14 14"><circle cx="7" cy="7.4" r="5.3" fill="none" stroke="#b01820" stroke-width="1.9"/><path d="M10.6 3.8 L3.4 11" stroke="#b01820" stroke-width="1.9"/></svg>
<svg class="abs" style="left:367.0px;top:277px" width="14" height="14" viewBox="0 0 14 14"><circle cx="7" cy="7.4" r="5.3" fill="none" stroke="#b01820" stroke-width="1.9"/><path d="M10.6 3.8 L3.4 11" stroke="#b01820" stroke-width="1.9"/></svg>
<svg class="abs" style="left:384.0px;top:277px" width="14" height="14" viewBox="0 0 14 14"><circle cx="7" cy="7.4" r="5.3" fill="none" stroke="#b01820" stroke-width="1.9"/><path d="M10.6 3.8 L3.4 11" stroke="#b01820" stroke-width="1.9"/></svg>
<svg class="abs" style="left:401.0px;top:277px" width="14" height="14" viewBox="0 0 14 14"><circle cx="7" cy="7.4" r="5.3" fill="none" stroke="#b01820" stroke-width="1.9"/><path d="M10.6 3.8 L3.4 11" stroke="#b01820" stroke-width="1.9"/></svg>
<svg class="abs" style="left:418.0px;top:277px" width="14" height="14" viewBox="0 0 14 14"><circle cx="7" cy="7.4" r="5.3" fill="none" stroke="#b01820" stroke-width="1.9"/><path d="M10.6 3.8 L3.4 11" stroke="#b01820" stroke-width="1.9"/></svg>
<svg class="abs" style="left:435.0px;top:277px" width="14" height="14" viewBox="0 0 14 14"><circle cx="7" cy="7.4" r="5.3" fill="none" stroke="#b01820" stroke-width="1.9"/><path d="M10.6 3.8 L3.4 11" stroke="#b01820" stroke-width="1.9"/></svg>
<svg class="abs" style="left:452.0px;top:277px" width="14" height="14" viewBox="0 0 14 14"><circle cx="7" cy="7.4" r="5.3" fill="none" stroke="#b01820" stroke-width="1.9"/><path d="M10.6 3.8 L3.4 11" stroke="#b01820" stroke-width="1.9"/></svg>
<svg class="abs" style="left:469.0px;top:277px" width="14" height="14" viewBox="0 0 14 14"><circle cx="7" cy="7.4" r="5.3" fill="none" stroke="#76306e" stroke-width="1.9"/><path d="M10.6 3.8 L3.4 11" stroke="#76306e" stroke-width="1.9"/></svg>
<svg class="abs" style="left:486.0px;top:277px" width="14" height="14" viewBox="0 0 14 14"><circle cx="7" cy="7.4" r="5.3" fill="none" stroke="#76306e" stroke-width="1.9"/><path d="M10.6 3.8 L3.4 11" stroke="#76306e" stroke-width="1.9"/></svg>
<svg class="abs" style="left:503.0px;top:277px" width="14" height="14" viewBox="0 0 14 14"><circle cx="7" cy="7.4" r="5.3" fill="none" stroke="#76306e" stroke-width="1.9"/><path d="M10.6 3.8 L3.4 11" stroke="#76306e" stroke-width="1.9"/></svg>
<svg class="abs" style="left:520.0px;top:277px" width="14" height="14" viewBox="0 0 14 14"><circle cx="7" cy="7.4" r="5.3" fill="none" stroke="#76306e" stroke-width="1.9"/><path d="M10.6 3.8 L3.4 11" stroke="#76306e" stroke-width="1.9"/></svg>
<svg class="abs" style="left:537.0px;top:277px" width="14" height="14" viewBox="0 0 14 14"><circle cx="7" cy="7.4" r="5.3" fill="none" stroke="#76306e" stroke-width="1.9"/><path d="M10.6 3.8 L3.4 11" stroke="#76306e" stroke-width="1.9"/></svg>
<svg class="abs" style="left:554.0px;top:277px" width="14" height="14" viewBox="0 0 14 14"><circle cx="7" cy="7.4" r="5.3" fill="none" stroke="#76306e" stroke-width="1.9"/><path d="M10.6 3.8 L3.4 11" stroke="#76306e" stroke-width="1.9"/></svg>
<svg class="abs" style="left:571.0px;top:277px" width="14" height="14" viewBox="0 0 14 14"><circle cx="7" cy="7.4" r="5.3" fill="none" stroke="#76306e" stroke-width="1.9"/><path d="M10.6 3.8 L3.4 11" stroke="#76306e" stroke-width="1.9"/></svg>
<svg class="abs" style="left:588.0px;top:277px" width="14" height="14" viewBox="0 0 14 14"><circle cx="7" cy="7.4" r="5.3" fill="none" stroke="#76306e" stroke-width="1.9"/><path d="M10.6 3.8 L3.4 11" stroke="#76306e" stroke-width="1.9"/></svg>
<svg class="abs" style="left:605.0px;top:277px" width="14" height="14" viewBox="0 0 14 14"><circle cx="7" cy="7.4" r="5.3" fill="none" stroke="#b01820" stroke-width="1.9"/><path d="M10.6 3.8 L3.4 11" stroke="#b01820" stroke-width="1.9"/></svg>
<svg class="abs" style="left:622.0px;top:277px" width="14" height="14" viewBox="0 0 14 14"><circle cx="7" cy="7.4" r="5.3" fill="none" stroke="#b01820" stroke-width="1.9"/><path d="M10.6 3.8 L3.4 11" stroke="#b01820" stroke-width="1.9"/></svg>
<svg class="abs" style="left:638.5px;top:277px" width="14" height="14" viewBox="0 0 14 14"><circle cx="7" cy="7.4" r="5.3" fill="none" stroke="#b01820" stroke-width="1.9"/><path d="M10.6 3.8 L3.4 11" stroke="#b01820" stroke-width="1.9"/></svg>
<svg class="abs" style="left:654.5px;top:277px" width="14" height="14" viewBox="0 0 14 14"><circle cx="7" cy="7.4" r="5.3" fill="none" stroke="#b01820" stroke-width="1.9"/><path d="M10.6 3.8 L3.4 11" stroke="#b01820" stroke-width="1.9"/></svg>
<svg class="abs" style="left:670.5px;top:277px" width="14" height="14" viewBox="0 0 14 14"><circle cx="7" cy="7.4" r="5.3" fill="none" stroke="#b01820" stroke-width="1.9"/><path d="M10.6 3.8 L3.4 11" stroke="#b01820" stroke-width="1.9"/></svg>
<svg class="abs" style="left:686.5px;top:277px" width="14" height="14" viewBox="0 0 14 14"><circle cx="7" cy="7.4" r="5.3" fill="none" stroke="#b01820" stroke-width="1.9"/><path d="M10.6 3.8 L3.4 11" stroke="#b01820" stroke-width="1.9"/></svg>
<svg class="abs" style="left:702.5px;top:277px" width="14" height="14" viewBox="0 0 14 14"><circle cx="7" cy="7.4" r="5.3" fill="none" stroke="#b01820" stroke-width="1.9"/><path d="M10.6 3.8 L3.4 11" stroke="#b01820" stroke-width="1.9"/></svg>
<svg class="abs" style="left:316.0px;top:305px" width="14" height="14" viewBox="0 0 14 14"><circle cx="7" cy="7.4" r="5.3" fill="none" stroke="#b01820" stroke-width="1.9"/><path d="M10.6 3.8 L3.4 11" stroke="#b01820" stroke-width="1.9"/></svg>
<svg class="abs" style="left:333.0px;top:305px" width="14" height="14" viewBox="0 0 14 14"><circle cx="7" cy="7.4" r="5.3" fill="none" stroke="#b01820" stroke-width="1.9"/><path d="M10.6 3.8 L3.4 11" stroke="#b01820" stroke-width="1.9"/></svg>
<svg class="abs" style="left:350.0px;top:305px" width="14" height="14" viewBox="0 0 14 14"><circle cx="7" cy="7.4" r="5.3" fill="none" stroke="#b01820" stroke-width="1.9"/><path d="M10.6 3.8 L3.4 11" stroke="#b01820" stroke-width="1.9"/></svg>
<svg class="abs" style="left:367.0px;top:305px" width="14" height="14" viewBox="0 0 14 14"><circle cx="7" cy="7.4" r="5.3" fill="none" stroke="#b01820" stroke-width="1.9"/><path d="M10.6 3.8 L3.4 11" stroke="#b01820" stroke-width="1.9"/></svg>
<svg class="abs" style="left:384.0px;top:305px" width="14" height="14" viewBox="0 0 14 14"><circle cx="7" cy="7.4" r="5.3" fill="none" stroke="#b01820" stroke-width="1.9"/><path d="M10.6 3.8 L3.4 11" stroke="#b01820" stroke-width="1.9"/></svg>
<svg class="abs" style="left:401.0px;top:305px" width="14" height="14" viewBox="0 0 14 14"><circle cx="7" cy="7.4" r="5.3" fill="none" stroke="#b01820" stroke-width="1.9"/><path d="M10.6 3.8 L3.4 11" stroke="#b01820" stroke-width="1.9"/></svg>
<svg class="abs" style="left:418.0px;top:305px" width="14" height="14" viewBox="0 0 14 14"><circle cx="7" cy="7.4" r="5.3" fill="none" stroke="#b01820" stroke-width="1.9"/><path d="M10.6 3.8 L3.4 11" stroke="#b01820" stroke-width="1.9"/></svg>
<svg class="abs" style="left:435.0px;top:305px" width="14" height="14" viewBox="0 0 14 14"><circle cx="7" cy="7.4" r="5.3" fill="none" stroke="#b01820" stroke-width="1.9"/><path d="M10.6 3.8 L3.4 11" stroke="#b01820" stroke-width="1.9"/></svg>
<svg class="abs" style="left:452.0px;top:305px" width="14" height="14" viewBox="0 0 14 14"><circle cx="7" cy="7.4" r="5.3" fill="none" stroke="#b01820" stroke-width="1.9"/><path d="M10.6 3.8 L3.4 11" stroke="#b01820" stroke-width="1.9"/></svg>
<svg class="abs" style="left:469.0px;top:305px" width="14" height="14" viewBox="0 0 14 14"><circle cx="7" cy="7.4" r="5.3" fill="none" stroke="#76306e" stroke-width="1.9"/><path d="M10.6 3.8 L3.4 11" stroke="#76306e" stroke-width="1.9"/></svg>
<svg class="abs" style="left:486.0px;top:305px" width="14" height="14" viewBox="0 0 14 14"><circle cx="7" cy="7.4" r="5.3" fill="none" stroke="#76306e" stroke-width="1.9"/><path d="M10.6 3.8 L3.4 11" stroke="#76306e" stroke-width="1.9"/></svg>
<svg class="abs" style="left:503.0px;top:305px" width="14" height="14" viewBox="0 0 14 14"><circle cx="7" cy="7.4" r="5.3" fill="none" stroke="#76306e" stroke-width="1.9"/><path d="M10.6 3.8 L3.4 11" stroke="#76306e" stroke-width="1.9"/></svg>
<svg class="abs" style="left:520.0px;top:305px" width="14" height="14" viewBox="0 0 14 14"><circle cx="7" cy="7.4" r="5.3" fill="none" stroke="#76306e" stroke-width="1.9"/><path d="M10.6 3.8 L3.4 11" stroke="#76306e" stroke-width="1.9"/></svg>
<svg class="abs" style="left:537.0px;top:305px" width="14" height="14" viewBox="0 0 14 14"><circle cx="7" cy="7.4" r="5.3" fill="none" stroke="#76306e" stroke-width="1.9"/><path d="M10.6 3.8 L3.4 11" stroke="#76306e" stroke-width="1.9"/></svg>
<svg class="abs" style="left:554.0px;top:305px" width="14" height="14" viewBox="0 0 14 14"><circle cx="7" cy="7.4" r="5.3" fill="none" stroke="#76306e" stroke-width="1.9"/><path d="M10.6 3.8 L3.4 11" stroke="#76306e" stroke-width="1.9"/></svg>
<svg class="abs" style="left:571.0px;top:305px" width="14" height="14" viewBox="0 0 14 14"><circle cx="7" cy="7.4" r="5.3" fill="none" stroke="#76306e" stroke-width="1.9"/><path d="M10.6 3.8 L3.4 11" stroke="#76306e" stroke-width="1.9"/></svg>
<svg class="abs" style="left:588.0px;top:305px" width="14" height="14" viewBox="0 0 14 14"><circle cx="7" cy="7.4" r="5.3" fill="none" stroke="#76306e" stroke-width="1.9"/><path d="M10.6 3.8 L3.4 11" stroke="#76306e" stroke-width="1.9"/></svg>
<svg class="abs" style="left:605.0px;top:305px" width="14" height="14" viewBox="0 0 14 14"><circle cx="7" cy="7.4" r="5.3" fill="none" stroke="#b01820" stroke-width="1.9"/><path d="M10.6 3.8 L3.4 11" stroke="#b01820" stroke-width="1.9"/></svg>
<svg class="abs" style="left:622.0px;top:305px" width="14" height="14" viewBox="0 0 14 14"><circle cx="7" cy="7.4" r="5.3" fill="none" stroke="#b01820" stroke-width="1.9"/><path d="M10.6 3.8 L3.4 11" stroke="#b01820" stroke-width="1.9"/></svg>
<svg class="abs" style="left:638.5px;top:305px" width="14" height="14" viewBox="0 0 14 14"><circle cx="7" cy="7.4" r="5.3" fill="none" stroke="#b01820" stroke-width="1.9"/><path d="M10.6 3.8 L3.4 11" stroke="#b01820" stroke-width="1.9"/></svg>
<svg class="abs" style="left:654.5px;top:305px" width="14" height="14" viewBox="0 0 14 14"><circle cx="7" cy="7.4" r="5.3" fill="none" stroke="#b01820" stroke-width="1.9"/><path d="M10.6 3.8 L3.4 11" stroke="#b01820" stroke-width="1.9"/></svg>
<svg class="abs" style="left:670.5px;top:305px" width="14" height="14" viewBox="0 0 14 14"><circle cx="7" cy="7.4" r="5.3" fill="none" stroke="#b01820" stroke-width="1.9"/><path d="M10.6 3.8 L3.4 11" stroke="#b01820" stroke-width="1.9"/></svg>
<div class="txt" style="left:731px;top:163px;letter-spacing:1.24px;color:#4a4a4a;-webkit-text-stroke:0.3px #4a4a4a;font-size:11.5px;line-height:14px">CONTRACTED AVAILABILITY</div>
<div class="abs" style="left:731px;top:186px;width:13px;height:13px;border:1px solid #5b8fc0;border-radius:2px;background:linear-gradient(135deg,#a6d2f4,#5a9ed8)"></div>
<div class="txt" style="left:752px;top:189px;color:#555;font-size:11px">Availability Required</div>
<div class="abs" style="left:731px;top:211px;width:13px;height:13px;border:1px solid #3f77a8;border-radius:2px;background:linear-gradient(to bottom,#9ccbec 0,#9ccbec 2px,#4d8cbf 2px,#4d8cbf 4px,#8cc0e4 4px,#8cc0e4 6px,#3f7fb4 6px,#3f7fb4 8px,#5d9bcc 8px,#2f6fa6 12px)"></div>
<div class="txt" style="left:752px;top:213px;color:#555;font-size:11px">Scheduled Activity</div>
<div class="txt" style="left:731px;top:238px;letter-spacing:1.24px;color:#4a4a4a;-webkit-text-stroke:0.3px #4a4a4a;font-size:11.5px;line-height:14px">UNCONTRACTED AVAILABILITY</div>
<div class="abs" style="left:731px;top:262px;width:13px;height:13px;border:1px solid #ebebeb;background:linear-gradient(135deg,#f4f4f4,#dcdcdc)"></div>
<div class="txt" style="left:752px;top:264px;color:#555;font-size:11px">Availability Not Required</div>
<div class="abs" style="left:731px;top:286px;width:14px;height:14px;border:1px solid #ececec;background:#fafafa"></div>
<svg class="abs" style="left:731px;top:286px" width="14" height="14" viewBox="0 0 14 14"><path d="M2 3.5 H12.6 M2 7.7 H12.6 M2 11.7 H12.6" stroke="#4a4a4a" stroke-width="1.9" stroke-linecap="round"/></svg>
<div class="txt" style="left:752px;top:289px;color:#555;font-size:11px">Scheduled Activity</div>
<div class="abs" style="left:731px;top:311px;width:13px;height:13px;border:1px solid #e2e2e2;background:linear-gradient(135deg,#b4b4b4,#e8e8e8)"></div>
<div class="txt" style="left:752px;top:313px;color:#555;font-size:11px">Public Holidays</div>
<div class="txt" style="left:731px;top:338px;letter-spacing:0.78px;color:#4a4a4a;-webkit-text-stroke:0.3px #4a4a4a;font-size:11.5px;line-height:14px">OUTAGES</div>
<svg class="abs" style="left:730px;top:360px" width="14" height="14" viewBox="0 0 14 14"><circle cx="7" cy="7.1" r="5.1" fill="#fff" stroke="#d64046" stroke-width="1.4"/><path d="M3.5 10.6 L6.6 7.5" stroke="#d64046" stroke-width="1.6"/><path d="M6.6 9.6 V4.2 H8.3 A1.45 1.45 0 0 1 8.3 7.1 H6.8" fill="none" stroke="#111" stroke-width="1.4"/></svg>
<div class="txt" style="left:750px;top:364px;color:#555;font-size:11px">Planned</div>
<svg class="abs" style="left:730px;top:384px" width="14" height="14" viewBox="0 0 14 14"><circle cx="7" cy="7.1" r="5.1" fill="none" stroke="#d63c42" stroke-width="1.6"/><path d="M10.6 3.5 L3.4 10.7" stroke="#d63c42" stroke-width="1.7"/></svg>
<div class="txt" style="left:750px;top:388px;color:#555;font-size:11px">Unplanned</div>
<div class="txt" style="left:262px;top:390px;color:#555;font-size:11px">Period Starting</div>
<div class="abs" style="left:261px;top:406px;width:240px;height:23px;border:1px solid #9d9d9d;border-radius:3px;background:#fff"></div>
<div class="txt" style="left:266px;top:411px;color:#444;font-size:12px;line-height:14px">08/01/2023 0:00</div>
<svg class="abs" style="left:486px;top:414px" width="9" height="8" viewBox="0 0 9 8"><path d="M2 3 L4.6 5.6 L7.2 3" fill="none" stroke="#222" stroke-width="1.4"/></svg>
<div class="abs" style="left:261px;top:432px;width:28px;height:24px;border-radius:3px;background:#0597da"></div>
<div class="abs" style="left:293px;top:432px;width:28px;height:24px;border-radius:3px;background:#0597da"></div>
<svg class="abs" style="left:254px;top:432px" width="70" height="24" viewBox="254 432 70 24" fill="none" stroke="#f4fbff" stroke-width="1.6" stroke-linecap="round"><path d="M277 442.4 L273.2 444.5 L277 446.6 M305 442.4 L308.8 444.5 L305 446.6"/></svg>
</div>
</body></html>
